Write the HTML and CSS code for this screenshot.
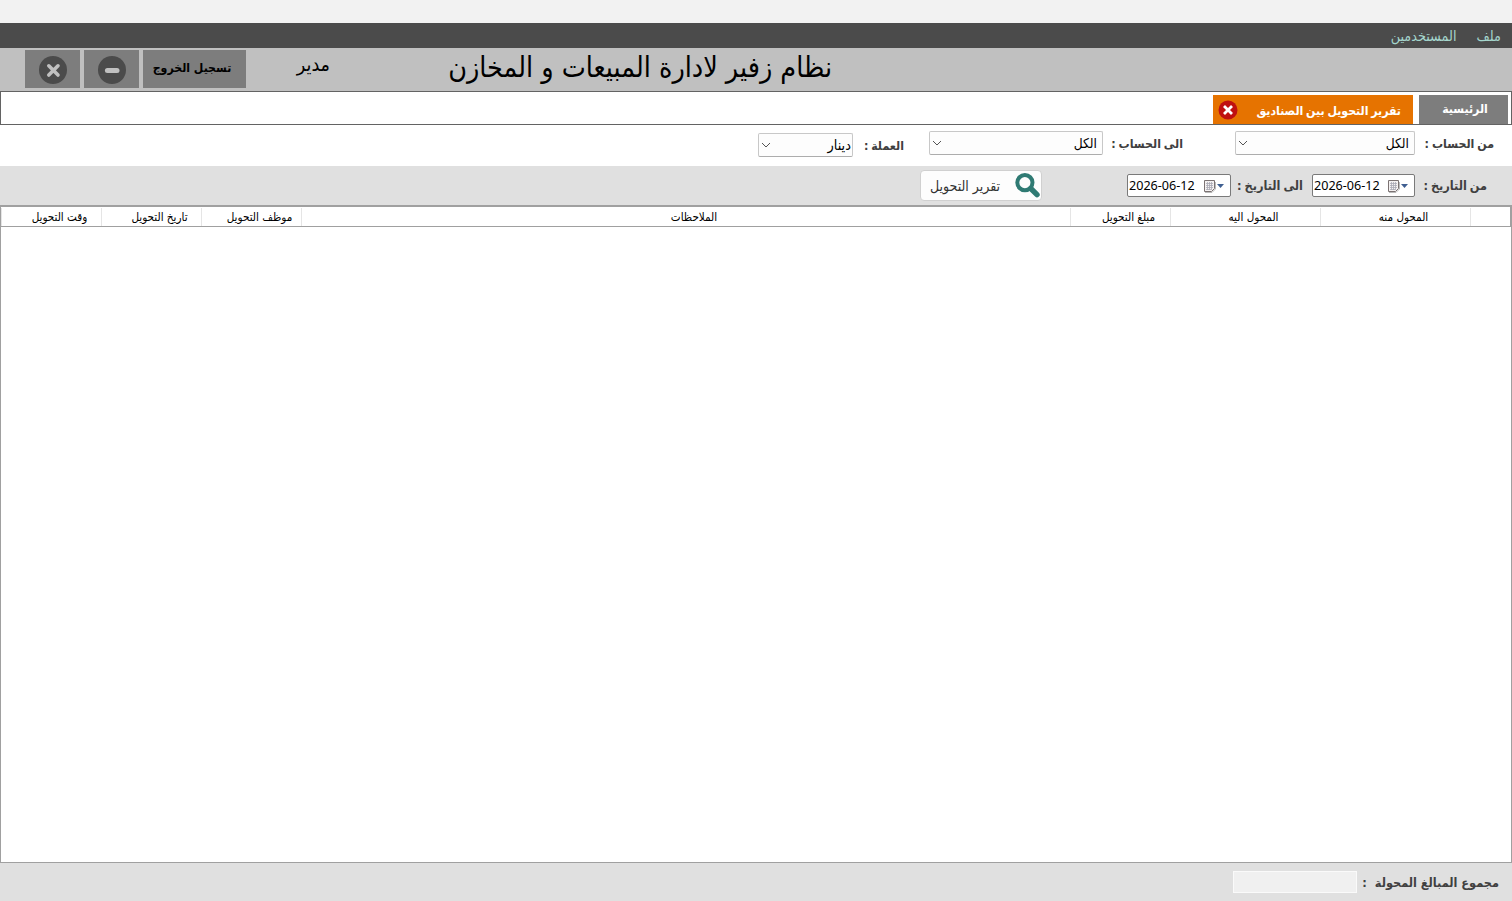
FILE: index.html
```html
<!DOCTYPE html>
<html lang="ar" dir="rtl">
<head>
  <meta charset="UTF-8">
  <title>نظام زفير</title>
  <link rel="stylesheet" href="styles.css">
</head>
<body>
  <div class="window-strip"></div>

  <div class="menu-bar">
    <span class="menu-item">ملف</span>
    <span class="menu-item">المستخدمين</span>
  </div>

  <div class="header">
    <h1 class="title">نظام زفير لادارة المبيعات و المخازن</h1>
    <div class="user-name">مدير</div>
    <button class="header-button logout">تسجيل الخروج</button>
    <button class="header-button">
      <svg width="28" height="28" viewBox="0 0 28 28">
        <circle cx="14" cy="14" r="14" fill="#4b4b4b"/>
        <path d="M9.4 14.5H19" stroke="#c0c0c0" stroke-width="5" stroke-linecap="round"/>
      </svg>
    </button>
    <button class="header-button">
      <svg width="28" height="28" viewBox="0 0 28 28">
        <circle cx="14" cy="14" r="14" fill="#4b4b4b"/>
        <path d="M9.8 9.8L19 19M19 9.8L9.8 19" stroke="#c0c0c0" stroke-width="3.6" stroke-linecap="round"/>
      </svg>
    </button>
  </div>

  <div class="tabs">
    <div class="tab tab-home"><span>الرئيسية</span></div>
    <div class="tab tab-active">
      <span>تقرير التحويل بين الصناديق</span>
      <svg width="20" height="20" viewBox="0 0 20 20">
        <circle cx="10" cy="10" r="9.5" fill="#c01010"/>
        <path d="M6 6L14 14M14 6L6 14" stroke="#fff" stroke-width="2.8"/>
      </svg>
    </div>
  </div>

  <div class="filters">
    <label class="label from-account">من الحساب :</label>
    <div class="combo combo-from">
      <span>الكل</span>
      <svg width="10" height="6" viewBox="0 0 10 6"><path d="M1 1L5 5L9 1" fill="none" stroke="#555"/></svg>
    </div>
    <label class="label to-account">الى الحساب :</label>
    <div class="combo combo-to">
      <span>الكل</span>
      <svg width="10" height="6" viewBox="0 0 10 6"><path d="M1 1L5 5L9 1" fill="none" stroke="#555"/></svg>
    </div>
    <label class="label currency">العملة :</label>
    <div class="combo combo-currency">
      <span>دينار</span>
      <svg width="10" height="6" viewBox="0 0 10 6"><path d="M1 1L5 5L9 1" fill="none" stroke="#555"/></svg>
    </div>
  </div>

  <div class="filters filters-dates">
    <label class="label from-date">من التاريخ :</label>
    <div class="date-picker">
      <span>2026-06-12</span>
      <svg width="22" height="14" viewBox="0 0 22 14">
        <path d="M2 13.5H9L12.5 10V3" fill="none" stroke="#bbb"/>
        <path d="M1.5 1.5H11.5V9.5L8.5 12.5H1.5Z" fill="#f4f1f1" stroke="#7b7272"/>
        <path d="M3 4.5H10M3 6.5H10M3 8.5H10M3 10.5H8M4.5 3V11M6.5 3V11M8.5 3V11" stroke="#a9a9b5" stroke-width=".8"/>
        <path d="M14 5H21L17.5 9Z" fill="#3f5f91"/>
      </svg>
    </div>
    <label class="label to-date">الى التاريخ :</label>
    <div class="date-picker date-picker-to">
      <span>2026-06-12</span>
      <svg width="22" height="14" viewBox="0 0 22 14">
        <path d="M2 13.5H9L12.5 10V3" fill="none" stroke="#bbb"/>
        <path d="M1.5 1.5H11.5V9.5L8.5 12.5H1.5Z" fill="#f4f1f1" stroke="#7b7272"/>
        <path d="M3 4.5H10M3 6.5H10M3 8.5H10M3 10.5H8M4.5 3V11M6.5 3V11M8.5 3V11" stroke="#a9a9b5" stroke-width=".8"/>
        <path d="M14 5H21L17.5 9Z" fill="#3f5f91"/>
      </svg>
    </div>
    <button class="report-button">
      <svg width="25" height="25" viewBox="0 0 25 25">
        <circle cx="9.9" cy="9.6" r="7.6" fill="none" stroke="#2f7a73" stroke-width="4"/>
        <path d="M15.8 15.5L22 21.7" stroke="#2f7a73" stroke-width="5.4" stroke-linecap="round"/>
      </svg>
      <span>تقرير التحويل</span>
    </button>
  </div>

  <div class="grid">
    <div class="grid-header">
      <div class="col"></div>
      <div class="col">المحول منه</div>
      <div class="col">المحول اليه</div>
      <div class="col">مبلغ التحويل</div>
      <div class="col">الملاحظات</div>
      <div class="col">موظف التحويل</div>
      <div class="col">تاريخ التحويل</div>
      <div class="col">وقت التحويل</div>
    </div>
  </div>

  <div class="footer">
    <label class="label total">مجموع المبالغ المحولة &nbsp;:</label>
    <div class="total-box"></div>
  </div>
</body>
</html>
```
FILE: styles.css
```css
* {
  box-sizing: border-box;
}
body {
  margin: 0;
  height: 901px;
  display: flex;
  flex-direction: column;
  overflow: hidden;
  background-color: #fff;
  font-family: "DejaVu Sans Condensed", "DejaVu Sans", sans-serif;
  color: #000;
  white-space: nowrap;
}
svg {
  display: block;
  flex: none;
}
button {
  font-family: inherit;
  padding: 0;
}

.window-strip {
  height: 23px;
  background-color: #f2f2f2;
}

.menu-bar {
  height: 25px;
  background-color: #4b4b4b;
  color: #a5d6cd;
  display: flex;
  align-items: center;
  padding: 1px 11px 0 0;
  gap: 20px;
  font-size: 14.3px;
}

/* title bar with the session buttons on the left */
.header {
  height: 43px;
  background-color: #c0c0c0;
  display: flex;
  align-items: flex-start;
  padding: 2px 680px 0 25px;
  gap: 4px;
}
.title {
  flex: none;
  margin: 0;
  width: 384px;
  font-size: 28.4px;
  font-weight: normal;
  line-height: 35px;
}
.user-name {
  flex: none;
  margin-right: 114px;
  margin-left: 46px;
  width: 34px;
  font-size: 19.5px;
  line-height: 29px;
}
.header-button {
  width: 55px;
  height: 38px;
  border: none;
  background-color: #7d7d7d;
  display: flex;
  align-items: center;
  justify-content: center;
  padding-top: 2px;
  flex: none;
}
.logout {
  width: 103px;
  padding: 0 5px 2px 0;
  font-size: 12.2px;
  font-weight: bold;
}

.tabs {
  height: 34px;
  border: 1px solid #636363;
  display: flex;
  align-items: flex-end;
  padding-right: 3px;
  gap: 6px;
}
.tab {
  height: 29px;
  display: flex;
  align-items: center;
  color: #fff;
  font-size: 12.2px;
  font-weight: bold;
  word-spacing: -1px;
}
.tab-home {
  width: 89px;
  padding: 0 0 2px 3px;
  justify-content: center;
  background-color: #7d7d7d;
}
.tab-active {
  width: 200px;
  padding: 0 12px 0 5px;
  justify-content: space-between;
  background-color: #e67300;
}
.tab-active span {
  padding-top: 3px;
}

.filters {
  height: 41px;
  display: flex;
  align-items: flex-start;
  padding: 6px 18px 0 0;
}
.filters-dates {
  height: 39px;
  padding: 8px 25px 0 0;
  background-color: #e0e0e0;
}
.label {
  flex: none;
  font-size: 12.3px;
  font-weight: bold;
  line-height: 24px;
  word-spacing: -1px;
  color: #404040;
}
.from-account { width: 79px; line-height: 27px; }
.to-account { width: 80px; margin-right: 52px; line-height: 27px; }
.currency { width: 51px; margin-right: 25px; line-height: 30px; }
.from-date { width: 72px; }
.to-date { width: 72px; margin-right: 9px; }
.from-date, .to-date { font-size: 12.6px; }

.combo {
  height: 24px;
  border: 1px solid #c8c8c8;
  border-bottom-color: #adadad;
  border-radius: 2px;
  background-color: #fdfdfd;
  display: flex;
  align-items: center;
  justify-content: space-between;
  padding: 0 5px 0 2px;
  font-size: 13.6px;
}
.combo-from { width: 180px; }
.combo-to { width: 174px; }
.combo-currency {
  width: 95px;
  margin-top: 2px;
  padding-right: 1px;
  font-size: 14.4px;
}

.date-picker {
  flex: none;
  width: 103px;
  height: 23px;
  border: 1px solid #7a7a7a;
  border-radius: 2px;
  background-color: #fff;
  display: flex;
  direction: ltr;
  align-items: center;
  justify-content: space-between;
  padding: 0 5px 0 1px;
  font-family: "Noto Sans", sans-serif;
  font-size: 12.6px;
}
.date-picker-to { width: 104px; }

.report-button {
  width: 122px;
  height: 31px;
  margin-top: -4px;
  margin-right: 85px;
  padding: 0 1px 1px 9px;
  border: 1px solid #d0d0d0;
  border-radius: 4px;
  background-color: #fdfdfd;
  display: flex;
  align-items: center;
  justify-content: space-between;
  font-size: 14px;
  color: #333;
}
.report-button span {
  padding-top: 1px;
}

.grid {
  flex: 1;
  border: 1px solid #a0a0a0;
  border-top-width: 2px;
}
.grid-header {
  height: 20px;
  border-bottom: 1px solid #a0a0a0;
  border-right: 1px solid #a0a0a0;
  padding-top: 1px;
  display: grid;
  grid-template-columns: 40px 150px 150px 100px 1fr 100px 100px 100px;
  font-size: 11.6px;
}
.col {
  height: 18px;
  border-left: 1px solid #e5e5e5;
  text-align: center;
  line-height: 18px;
  text-indent: -16px;
}

.footer {
  height: 38px;
  background-color: #e0e0e0;
  display: flex;
  align-items: center;
  padding-right: 13px;
}
.total {
  width: 142px;
  padding-top: 2px;
  font-size: 12.6px;
  word-spacing: 0;
}
.total-box {
  width: 124px;
  height: 22px;
  border: 1px solid #fafafa;
  background-color: #f0f0f0;
}
```
